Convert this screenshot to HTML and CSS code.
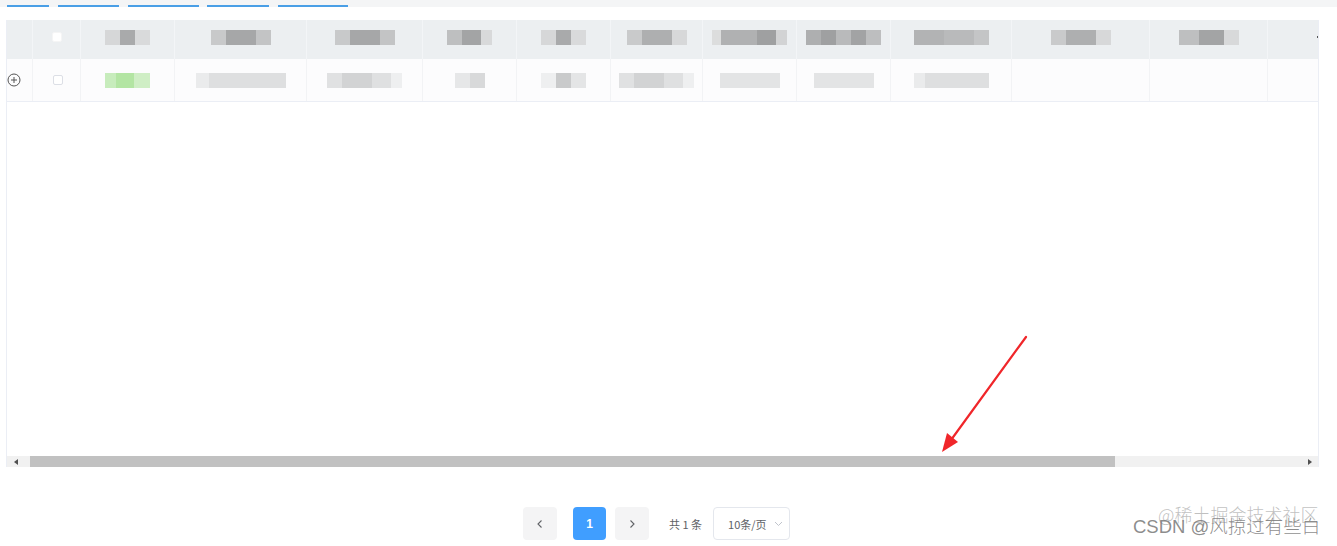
FILE: index.html
```html
<!DOCTYPE html>
<html lang="zh-CN">
<head>
<meta charset="utf-8">
<title>Table</title>
<link rel="stylesheet" href="styles.css">
</head>
<body>
<div class="page">
  <div class="topbar">
    <span class="tab t1"></span>
    <span class="tab t2"></span>
    <span class="tab t3"></span>
    <span class="tab t4"></span>
    <span class="tab t5"></span>
  </div>

  <div class="table">
    <div class="row head">
      <div class="cell c1"></div>
      <div class="cell c2"><span class="chk chk-head"></span></div>
      <div class="cell c3"><span class="mz hz1 w45"></span></div>
      <div class="cell c4"><span class="mz hz2 w60"></span></div>
      <div class="cell c5"><span class="mz hz2 w60"></span></div>
      <div class="cell c6"><span class="mz hz3 w45"></span></div>
      <div class="cell c7"><span class="mz hz1 w45"></span></div>
      <div class="cell c8"><span class="mz hz4 w60"></span></div>
      <div class="cell c9"><span class="mz hz5 w75"></span></div>
      <div class="cell c10"><span class="mz hz6 w75"></span></div>
      <div class="cell c11"><span class="mz hz7 w75"></span></div>
      <div class="cell c12"><span class="mz hz4 w60"></span></div>
      <div class="cell c13"><span class="mz hz3 w60"></span></div>
      <div class="cell c14"><span class="dot"></span></div>
    </div>
    <div class="row body">
      <div class="cell c1 expand-cell">
        <svg class="expand" width="14" height="14" viewBox="0 0 14 14"><circle cx="7" cy="7" r="6" fill="none" stroke="#555" stroke-width="1"/><path d="M7 4v6M4 7h6" stroke="#555" stroke-width="1"/></svg>
      </div>
      <div class="cell c2"><span class="chk"></span></div>
      <div class="cell c3"><span class="mz green w45"></span></div>
      <div class="cell c4"><span class="mz bz1 w90"></span></div>
      <div class="cell c5"><span class="mz bz2 w75"></span></div>
      <div class="cell c6"><span class="mz bz3 w30"></span></div>
      <div class="cell c7"><span class="mz bz4 w45"></span></div>
      <div class="cell c8"><span class="mz bz2 w75"></span></div>
      <div class="cell c9"><span class="mz bz5 w60"></span></div>
      <div class="cell c10"><span class="mz bz5 w60"></span></div>
      <div class="cell c11"><span class="mz bz1 w75"></span></div>
      <div class="cell c12"></div>
      <div class="cell c13"></div>
      <div class="cell c14"></div>
    </div>
    <div class="empty"></div>
    <div class="scrollbar">
      <span class="arrow left"></span>
      <span class="track"><span class="thumb"></span></span>
      <span class="arrow right"></span>
    </div>
  </div>

  <div class="pager">
    <button class="pbtn">
      <svg width="10" height="10" viewBox="0 0 10 10"><path d="M6.5 1.5L3 5l3.5 3.5" fill="none" stroke="#606266" stroke-width="1.1"/></svg>
    </button>
    <button class="pbtn active">1</button>
    <button class="pbtn">
      <svg width="10" height="10" viewBox="0 0 10 10"><path d="M3.5 1.5L7 5 3.5 8.5" fill="none" stroke="#606266" stroke-width="1.1"/></svg>
    </button>
    <span class="total">共 1 条</span>
    <span class="select">
      <span class="sel-text">10条/页</span>
      <svg width="9" height="6" viewBox="0 0 9 6"><path d="M1 1l3.5 3.5L8 1" fill="none" stroke="#c0c4cc" stroke-width="1"/></svg>
    </span>
  </div>
</div>

<svg class="annot" width="100" height="125" viewBox="0 0 100 125">
  <path d="M86 2 L11 105" stroke="#f0262a" stroke-width="2.2" stroke-linecap="round"/>
  <path d="M2 117 L7 98 L18 107 Z" fill="#f0262a"/>
</svg>

<div class="wm wm1">@稀土掘金技术社区</div>
<div class="wm wm2">CSDN @风掠过有些白</div>
</body>
</html>
```

FILE: styles.css
```css
* { box-sizing: border-box; }
html, body { margin: 0; padding: 0; background: #fff; }
body {
  width: 1337px;
  height: 546px;
  overflow: hidden;
  position: relative;
  font-family: "Noto Sans CJK SC", "Liberation Sans", sans-serif;
  color: #606266;
}

.topbar {
  height: 7px;
  background: #f4f5f6;
  display: flex;
  align-items: flex-end;
  gap: 9px;
  padding-left: 7px;
}
.tab { height: 2px; background: #4a9fe6; display: block; }
.t1 { width: 42px; }
.t2 { width: 61px; }
.t3 { width: 71px; margin-right: -1px; }
.t4 { width: 62px; }
.t5 { width: 70px; }

.table {
  margin: 13px 0 0 6px;
  width: 1313px;
  border-left: 1px solid #ebeef5;
  border-right: 1px solid #ebeef5;
}
.row { display: flex; }
.row.head { height: 39px; background: #eceff1; }
.row.body { height: 43px; background: #fcfcfd; border-bottom: 1px solid #ebeef5; }
.cell {
  display: flex;
  align-items: center;
  justify-content: center;
  flex: none;
  border-right: 1px solid #f2f3f5;
}
.head .cell { border-right: 1px solid #f3f5f7; padding-bottom: 5px; }
.cell.c14 { border-right: none; }
.c1 { width: 26px; }
.c2 { width: 48px; }
.c3 { width: 94px; }
.c4 { width: 132px; }
.c5 { width: 116px; }
.c6 { width: 94px; }
.c7 { width: 94px; }
.c8 { width: 92px; }
.c9 { width: 94px; }
.c10 { width: 94px; }
.c11 { width: 121px; }
.c12 { width: 138px; }
.c13 { width: 118px; }
.c14 { width: 50px; justify-content: flex-end; }
.expand-cell { justify-content: flex-start; padding-left: 0; }

.chk {
  width: 10px;
  height: 10px;
  border: 1px solid #dcdfe6;
  border-radius: 2px;
  background: #fff;
  margin-left: 3px;
}
.chk-head { border-color: #f5f5f5; margin-left: 1px; }
.dot { width: 1px; height: 2px; background: #555; }

.mz { display: block; height: 15px; filter: blur(0.6px); }
.w30 { width: 30px; }
.w45 { width: 45px; }
.w60 { width: 60px; }
.w75 { width: 75px; }
.w90 { width: 90px; }

.hz1 { background: linear-gradient(90deg, #d6d7d8 0 33%, #a9aaab 33% 66%, #d9dadb 66%); }
.hz2 { background: linear-gradient(90deg, #c8c9ca 0 25%, #a6a7a8 25% 75%, #c3c4c5 75%); }
.hz3 { background: linear-gradient(90deg, #bebfc0 0 33%, #a3a4a5 33% 75%, #d8d9da 75%); }
.hz4 { background: linear-gradient(90deg, #c9cacb 0 25%, #aeafb0 25% 75%, #d7d8d9 75%); }
.hz5 { background: linear-gradient(90deg, #dcdddd 0 12%, #b0b1b2 12% 60%, #9fa0a1 60% 85%, #d2d3d4 85%); }
.hz6 { background: linear-gradient(90deg, #aeafb0 0 20%, #9fa0a1 20% 40%, #b9babb 40% 60%, #a2a3a4 60% 80%, #bdbebf 80%); }
.hz7 { background: linear-gradient(90deg, #b2b3b4 0 40%, #b9babb 40% 80%, #c4c5c6 80%); }

.green { background: linear-gradient(90deg, #c7ecbc 0 25%, #b3e5a3 25% 65%, #cfeec5 65%); }
.bz1 { background: linear-gradient(90deg, #eaebec 0 15%, #dedfe0 15% 100%); }
.bz2 { background: linear-gradient(90deg, #e0e1e2 0 20%, #d2d3d4 20% 60%, #dfe0e1 60% 85%, #eeeff0 85%); }
.bz3 { background: linear-gradient(90deg, #e6e7e8 0 50%, #d8d9da 50%); }
.bz4 { background: linear-gradient(90deg, #eeeff0 0 33%, #c9cacb 33% 66%, #e4e5e6 66%); }
.bz5 { background: #e3e4e5; }

.empty { height: 354px; }

.scrollbar {
  height: 11px;
  display: flex;
  align-items: stretch;
  background: #f1f1f1;
}
.arrow { width: 23px; flex: none; display: flex; align-items: center; justify-content: center; }
.arrow.left::before {
  content: "";
  border-style: solid;
  border-width: 3px 4px 3px 0;
  border-color: transparent #505050 transparent transparent;
  margin-left: -6px;
}
.arrow.right::before {
  content: "";
  border-style: solid;
  border-width: 3px 0 3px 4px;
  border-color: transparent transparent transparent #505050;
  margin-left: 6px;
}
.track { flex: 1; display: flex; }
.thumb { width: 1085px; background: #c1c1c1; }

.pager {
  display: flex;
  align-items: center;
  padding-left: 523px;
  margin-top: 40px;
  height: 33px;
}
.pbtn {
  width: 34px;
  height: 33px;
  border: none;
  border-radius: 4px;
  background: #f4f4f5;
  display: flex;
  align-items: center;
  justify-content: center;
  padding: 0;
  margin-right: 16px;
  font-family: "Liberation Sans", sans-serif;
  font-size: 12px;
  font-weight: bold;
  color: #fff;
}
.pbtn.active { width: 33px; background: #409eff; margin-right: 9px; }
.pbtn:nth-child(3) { margin-right: 20px; }
.total { font-size: 11px; color: #606266; margin-right: 11px; }
.select {
  width: 77px;
  height: 33px;
  border: 1px solid #e4e7ed;
  border-radius: 4px;
  display: flex;
  align-items: center;
  padding: 0 6px 0 14px;
  justify-content: space-between;
  font-size: 11px;
  color: #606266;
}

.annot { position: absolute; left: 940px; top: 335px; }

.wm {
  position: absolute;
  white-space: nowrap;
  line-height: 1;
}
.wm1 { left: 1158px; top: 505px; font-size: 18px; color: rgba(130,130,130,0.5); font-family: "Noto Sans CJK SC", sans-serif; font-weight: 300; }
.wm2 {
  left: 1133px; top: 518px; font-size: 18.5px; color: rgba(120,120,120,0.85);
  font-family: "Liberation Sans", "Noto Sans CJK SC", sans-serif; font-weight: 300;
}
```
